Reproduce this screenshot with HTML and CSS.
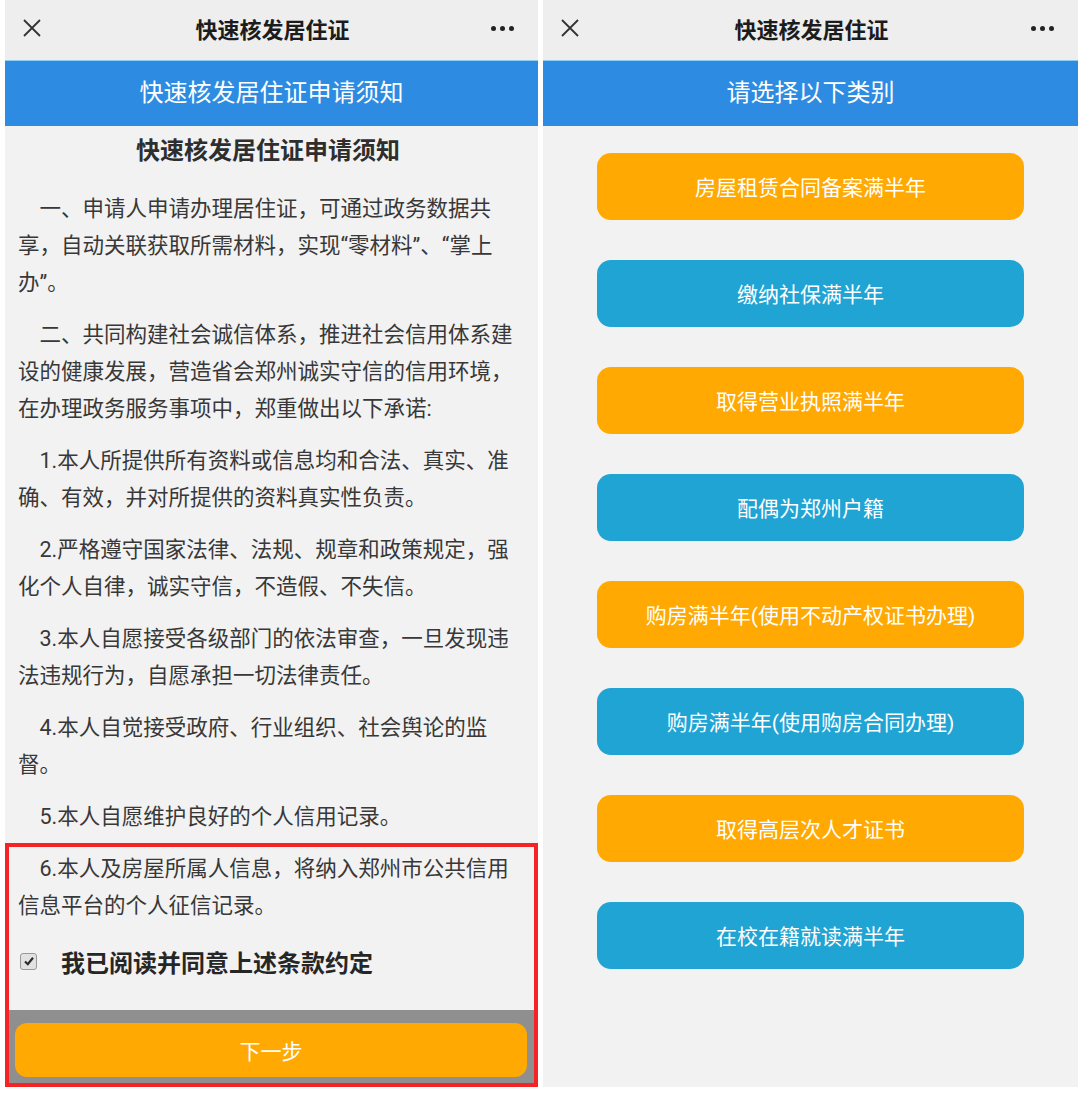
FILE: index.html
```html
<!DOCTYPE html>
<html lang="zh-CN">
<head>
    <meta charset="UTF-8">
    <meta name="viewport" content="width=device-width, initial-scale=1.0">
    <title>快速核发居住证</title>
    <link rel="stylesheet" href="styles.css">
</head>
<body>
    <div class="screens">
        <!-- 申请须知 -->
        <section class="phone notice">
            <header class="topbar">
                <svg class="close-icon" viewBox="0 0 20 20" width="20" height="20">
                    <path d="M2 2 L18 18 M18 2 L2 18" stroke="#333" stroke-width="1.8" fill="none"/>
                </svg>
                <h1>快速核发居住证</h1>
                <span class="more"><i></i><i></i><i></i></span>
            </header>
            <div class="banner">快速核发居住证申请须知</div>
            <div class="notice-body">
                <h2>快速核发居住证申请须知</h2>
                <p>一、申请人申请办理居住证，可通过政务数据共享，自动关联获取所需材料，实现“零材料”、“掌上办”。</p>
                <p>二、共同构建社会诚信体系，推进社会信用体系建设的健康发展，营造省会郑州诚实守信的信用环境，在办理政务服务事项中，郑重做出以下承诺:</p>
                <p>1.本人所提供所有资料或信息均和合法、真实、准确、有效，并对所提供的资料真实性负责。</p>
                <p>2.严格遵守国家法律、法规、规章和政策规定，强化个人自律，诚实守信，不造假、不失信。</p>
                <p>3.本人自愿接受各级部门的依法审查，一旦发现违法违规行为，自愿承担一切法律责任。</p>
                <p>4.本人自觉接受政府、行业组织、社会舆论的监督。</p>
                <p>5.本人自愿维护良好的个人信用记录。</p>
                <p>6.本人及房屋所属人信息，将纳入郑州市公共信用信息平台的个人征信记录。</p>
                <label class="agree">
                    <span class="check">
                        <svg viewBox="0 0 12 12" width="12" height="12">
                            <path d="M2 6.5 L4.8 9.2 L10 2.8" stroke="#2b2b2b" stroke-width="2.2" fill="none"/>
                        </svg>
                    </span>
                    我已阅读并同意上述条款约定
                </label>
            </div>
            <div class="footer-bar">
                <button class="next-btn">下一步</button>
            </div>
            <div class="highlight"></div>
        </section>

        <!-- 类别选择 -->
        <section class="phone category">
            <header class="topbar">
                <svg class="close-icon" viewBox="0 0 20 20" width="20" height="20">
                    <path d="M2 2 L18 18 M18 2 L2 18" stroke="#333" stroke-width="1.8" fill="none"/>
                </svg>
                <h1>快速核发居住证</h1>
                <span class="more"><i></i><i></i><i></i></span>
            </header>
            <div class="banner">请选择以下类别</div>
            <div class="category-list">
                <button class="cat-btn orange">房屋租赁合同备案满半年</button>
                <button class="cat-btn blue">缴纳社保满半年</button>
                <button class="cat-btn orange">取得营业执照满半年</button>
                <button class="cat-btn blue">配偶为郑州户籍</button>
                <button class="cat-btn orange">购房满半年(使用不动产权证书办理)</button>
                <button class="cat-btn blue">购房满半年(使用购房合同办理)</button>
                <button class="cat-btn orange">取得高层次人才证书</button>
                <button class="cat-btn blue">在校在籍就读满半年</button>
            </div>
        </section>
    </div>
</body>
</html>
```

FILE: styles.css
```css
body {
    margin: 0;
    padding: 0;
    background-color: #fff;
    font-family: Roboto, "Noto Sans CJK SC", sans-serif;
    color: #333;
}
.screens {
    display: flex;
    gap: 5px;
    padding-left: 5px;
    width: 1075px;
    height: 1093px;
}
.phone {
    position: relative;
    display: flex;
    flex-direction: column;
    height: 1087px;
    background-color: #f2f2f2;
}
.notice {
    width: 533px;
}
.category {
    width: 535px;
}
.topbar {
    box-sizing: border-box;
    height: 60px;
    display: flex;
    align-items: center;
    justify-content: space-between;
    padding: 0 24px 5px 17px;
    background-color: #eeeeee;
}
.topbar h1 {
    margin: 0;
    font-size: 22px;
    font-weight: 700;
    color: #1c1c1c;
    padding-left: 12px;
}
.close-icon {
    display: block;
}
.more {
    display: flex;
    gap: 4px;
    padding-top: 2px;
}
.more i {
    width: 5px;
    height: 5px;
    border-radius: 50%;
    background-color: #222;
}
.banner {
    height: 65px;
    line-height: 64px;
    text-align: center;
    font-size: 24px;
    color: #fff;
    background-color: #2d8ce2;
    border-top: 1px solid #8ccff4;
}
.notice-body {
    flex: 1;
    padding: 0 20px 0 13px;
}
.notice-body h2 {
    margin: 0;
    padding-top: 8px;
    line-height: 34px;
    font-size: 24px;
    font-weight: 700;
    text-align: center;
    color: #2e2e2e;
}
.notice-body p {
    margin: 15px 0 0;
    font-size: 21.5px;
    line-height: 37px;
    text-indent: 1em;
    color: #383838;
}
.notice-body h2 + p {
    margin-top: 22px;
}
.agree {
    display: flex;
    align-items: center;
    gap: 24px;
    height: 44px;
    margin-top: 15px;
    font-size: 24px;
    font-weight: 700;
    color: #262626;
}
.check {
    display: flex;
    align-items: center;
    justify-content: center;
    width: 15px;
    height: 15px;
    margin-left: 2px;
    border: 1px solid #9a9a9a;
    border-radius: 3px;
    background-color: #e2e2e2;
}
.footer-bar {
    padding: 13px 11px 10px 10px;
    background-color: #8f8f8f;
}
.next-btn {
    display: block;
    width: 100%;
    height: 54px;
    border: none;
    border-radius: 12px;
    background-color: #ffa902;
    color: #fff;
    font-family: inherit;
    font-size: 21px;
}
.highlight {
    position: absolute;
    top: 843px;
    left: 0;
    right: 0;
    bottom: 0;
    border: 4px solid #f42424;
}
.category-list {
    display: flex;
    flex-direction: column;
    align-items: center;
    gap: 40px;
    padding-top: 27px;
}
.cat-btn {
    width: 427px;
    height: 67px;
    padding-bottom: 3px;
    border: none;
    border-radius: 14px;
    color: #fff;
    font-family: inherit;
    font-size: 21px;
}
.cat-btn.orange {
    background-color: #ffa902;
}
.cat-btn.blue {
    background-color: #1fa4d4;
}
```
